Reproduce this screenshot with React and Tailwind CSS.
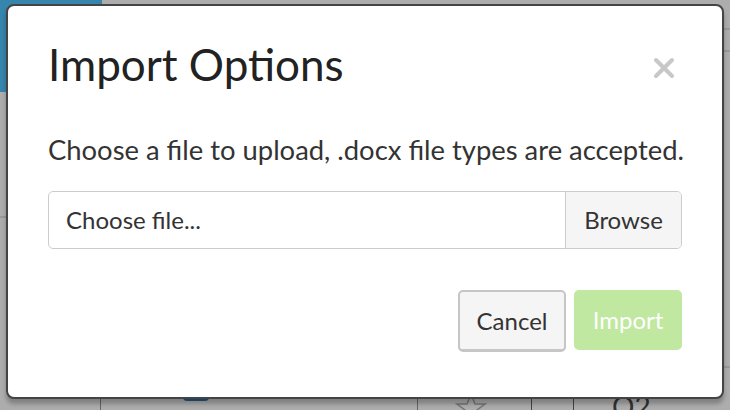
import { X } from 'lucide-react';

const font = { fontFamily: 'Lato, "Noto Sans", sans-serif' };

// the dimmed page that sits under the dialog
const Backdrop = () => (
  <div className="absolute inset-0 flex flex-col">
    <div className="flex h-[92px]">
      <div className="w-[102px] bg-[#3585ad]" />
      <div className="flex-1 flex flex-col items-end">
        <div className="w-[10px] h-[30px] border-b-2 border-[#999999]" />
        <div className="w-[10px] h-[22px] border-b-2 border-[#999999]" />
      </div>
    </div>
    <div className="flex-1 flex justify-between">
      <div className="w-[10px] h-[126px] border-b-2 border-[#999999]" />
      <div className="w-[10px] h-[276px] border-b-2 border-[#999999]" />
    </div>
    <div className="h-[20px] flex items-start text-[#333333]">
      <div className="w-[101px] h-full border-r border-[#666666]" />
      <div className="w-[82px]" />
      <div className="w-[26px] h-[4px] mt-[7px] rounded-b bg-[#1f5a8a]" />
      <div className="w-[209px] h-full border-r border-[#666666]" />
      <div className="w-[106px] flex justify-center pt-[2px]">
        <svg width="32" height="30" viewBox="0 0 32 30">
          <path d="M16 2 L20 12 L30 12 L22 18 L25 28 L16 22 L7 28 L10 18 L2 12 L12 12 Z" fill="none" stroke="#777777" strokeWidth="1.5" />
        </svg>
      </div>
      <div className="w-[8px] h-full border-r border-[#444444]" />
      <div className="w-[42px] h-full border-r border-[#444444]" />
      <div className="pl-[38px] pt-[2px] text-[28px] leading-none">O2</div>
    </div>
  </div>
);

export default function App() {
  return (
    <div className="relative w-[730px] h-[410px] overflow-hidden bg-[#adadad] pl-[6px] pt-[4px]" style={font}>
      <Backdrop />
      <div className="relative w-[718px] h-[395px] bg-white border-2 border-[#444444] rounded-[8px] shadow-[0_5px_4px_rgba(0,0,0,0.25)] flex flex-col px-10 pt-[32px]">
        <div className="flex items-start justify-between">
          <h1 className="text-[44px] leading-[52px] text-[#222222] font-normal">Import Options</h1>
          <button className="mt-[14px] mr-[2px] text-[#c8c8c8]">
            <X size={32} strokeWidth={3} />
          </button>
        </div>
        <p className="mt-[44px] text-[27.4px] leading-[32px] text-[#333333] whitespace-nowrap">
          Choose a file to upload, .docx file types are accepted.
        </p>
        <div className="mt-[25px] flex h-[58px] border-[1.5px] border-[#cccccc] rounded-[5px] overflow-hidden">
          <div className="flex-1 flex items-center pl-[17px] text-[24px] text-[#333333]">Choose file...</div>
          <div className="w-[116px] flex items-center justify-center border-l-[1.5px] border-[#cccccc] bg-[#f5f5f5] text-[24px] text-[#333333]">
            Browse
          </div>
        </div>
        <div className="mt-[41px] flex justify-end gap-[8px]">
          <button className="w-[108px] h-[62px] bg-[#f5f5f5] border-2 border-b-[3px] border-[#c6c6c6] rounded-[5px] text-[24px] text-[#333333]">
            Cancel
          </button>
          <button className="w-[108px] h-[60px] bg-[#c0e8a0] rounded-[5px] text-[24px] text-white">
            Import
          </button>
        </div>
      </div>
    </div>
  );
}
